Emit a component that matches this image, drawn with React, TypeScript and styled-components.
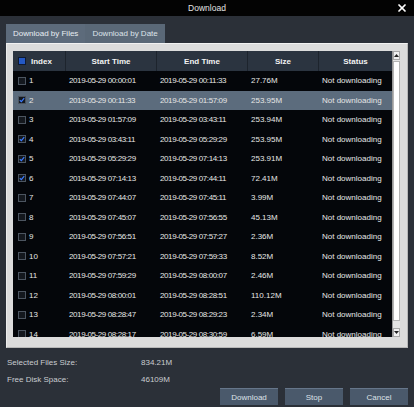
import React from "react";
import styled, { createGlobalStyle } from "styled-components";
import { X } from "lucide-react";

const rows = [
  { index: 1, start: "2019-05-29 00:00:01", end: "2019-05-29 00:11:33", size: "27.76M", checked: false },
  { index: 2, start: "2019-05-29 00:11:33", end: "2019-05-29 01:57:09", size: "253.95M", checked: true },
  { index: 3, start: "2019-05-29 01:57:09", end: "2019-05-29 03:43:11", size: "253.94M", checked: false },
  { index: 4, start: "2019-05-29 03:43:11", end: "2019-05-29 05:29:29", size: "253.95M", checked: true },
  { index: 5, start: "2019-05-29 05:29:29", end: "2019-05-29 07:14:13", size: "253.91M", checked: true },
  { index: 6, start: "2019-05-29 07:14:13", end: "2019-05-29 07:44:11", size: "72.41M", checked: true },
  { index: 7, start: "2019-05-29 07:44:07", end: "2019-05-29 07:45:11", size: "3.99M", checked: false },
  { index: 8, start: "2019-05-29 07:45:07", end: "2019-05-29 07:56:55", size: "45.13M", checked: false },
  { index: 9, start: "2019-05-29 07:56:51", end: "2019-05-29 07:57:27", size: "2.36M", checked: false },
  { index: 10, start: "2019-05-29 07:57:21", end: "2019-05-29 07:59:33", size: "8.52M", checked: false },
  { index: 11, start: "2019-05-29 07:59:29", end: "2019-05-29 08:00:07", size: "2.46M", checked: false },
  { index: 12, start: "2019-05-29 08:00:01", end: "2019-05-29 08:28:51", size: "110.12M", checked: false },
  { index: 13, start: "2019-05-29 08:28:47", end: "2019-05-29 08:29:23", size: "2.34M", checked: false },
  { index: 14, start: "2019-05-29 08:28:17", end: "2019-05-29 08:30:59", size: "6.59M", checked: false },
];

const selectedRow = 2;

const GlobalStyle = createGlobalStyle`
  html, body {
    margin: 0;
    padding: 0;
    background: #2b3038;
  }
  body {
    font-family: "Liberation Sans", Arial, sans-serif;
    font-size: 8px;
  }
`;

const Window = styled.div`
  width: 414px;
  height: 407px;
  background: #2b3038;
  display: flex;
  flex-direction: column;
  overflow: hidden;
`;

const TitleBar = styled.div`
  height: 16px;
  background: #030303;
  color: #e4e4e4;
  font-size: 8.5px;
  display: flex;
  align-items: center;
  justify-content: center;
  position: relative;
`;

const CloseBtn = styled.div`
  position: absolute;
  right: 6px;
  top: 2px;
  width: 12px;
  height: 12px;
  display: flex;
  color: #ffffff;
`;

const Content = styled.div`
  padding: 8px 6px 0 6px;
  display: flex;
  flex-direction: column;
`;

const TabBar = styled.div`
  display: flex;
  align-self: flex-start;
  height: 19px;
  background: #5a6877;
`;

const Tab = styled.div<{ $active?: boolean }>`
  padding: 0 7px;
  display: flex;
  align-items: center;
  color: ${(p) => (p.$active ? "#e8edf2" : "#dde3e9")};
  background: ${(p) => (p.$active ? "#5d6b7b" : "#5a6877")};
`;

const Panel = styled.div`
  background: #dcdcdc;
  border-top: 1px solid #f2f2f2;
  border-left: 1px solid #ececec;
  border-right: 1px solid #b8b8b8;
  border-bottom: 1px solid #b8b8b8;
  padding: 7px 7px 0 6px;
  height: 305px;
  box-sizing: border-box;
`;

const Table = styled.div`
  display: flex;
  height: 286px;
  background: #04060a;
`;

const TableMain = styled.div`
  width: 379px;
  display: flex;
  flex-direction: column;
  overflow: hidden;
`;

const Grid = styled.div`
  display: grid;
  grid-template-columns: 53px 91px 91px 71px 73px;
`;

const HeaderRow = styled(Grid)`
  height: 20px;
  background: #2b3440;
  flex-shrink: 0;
`;

const HeaderCell = styled.div<{ $left?: boolean }>`
  display: flex;
  align-items: center;
  justify-content: ${(p) => (p.$left ? "flex-start" : "center")};
  padding-left: ${(p) => (p.$left ? "5px" : "0")};
  gap: 5px;
  color: #f2f2f2;
  font-weight: bold;
  border-right: 1px solid #1d242d;
  &:last-child {
    border-right: none;
  }
`;

const Body = styled.div`
  flex: 1;
  overflow: hidden;
`;

const Row = styled(Grid)<{ $selected?: boolean }>`
  height: 19.5px;
  background: ${(p) => (p.$selected ? "#5c6c7d" : "#04060a")};
  color: #e6e6e6;
`;

const Cell = styled.div<{ $time?: boolean }>`
  display: flex;
  align-items: center;
  padding-left: 3px;
  white-space: nowrap;
  letter-spacing: ${(p) => (p.$time ? "-0.4px" : "0")};
`;

const IndexCell = styled.div`
  display: flex;
  align-items: center;
  padding-left: 5px;
  gap: 3px;
`;

const Checkbox = styled.div<{ $header?: boolean }>`
  width: 8px;
  height: 8px;
  box-sizing: border-box;
  border: 1px solid ${(p) => (p.$header ? "#0d1a33" : "#4c5560")};
  background: ${(p) => (p.$header ? "#2458c4" : "#14181e")};
  display: flex;
  align-items: center;
  justify-content: center;
`;

const Scrollbar = styled.div`
  width: 8px;
  display: flex;
  flex-direction: column;
  background: #e4e4e4;
  border-left: 1px solid #9a9a9a;
  box-sizing: border-box;
`;

const ScrollArrow = styled.div`
  height: 9px;
  background: #f0f0f0;
  border: 1px solid #a8a8a8;
  box-sizing: border-box;
  display: flex;
  align-items: center;
  justify-content: center;
`;

const ScrollThumb = styled.div`
  margin: 1px 0;
  height: 260px;
  background: #ffffff;
  border: 1px solid #b4b4b4;
  box-sizing: border-box;
`;

const ScrollTrack = styled.div`
  flex: 1;
`;

const Info = styled.div`
  padding: 6px 1px 0 1px;
  color: #c9ccd0;
`;

const InfoRow = styled.div`
  display: grid;
  grid-template-columns: 134px auto;
  height: 17px;
  align-items: center;
`;

const Buttons = styled.div`
  display: flex;
  justify-content: flex-end;
  gap: 7px;
`;

const Button = styled.button`
  width: 58px;
  height: 17px;
  padding: 0;
  border: none;
  border-top: 1px solid #66768a;
  background: #4a596b;
  color: #dde2e8;
  font-family: "Liberation Sans", Arial, sans-serif;
  font-size: 8px;
`;

function Check() {
  return (
    <svg width="6" height="6" viewBox="0 0 6 6">
      <path d="M0.8 3.2 L2.4 4.7 L5.2 1.2" fill="none" stroke="#3b7bff" strokeWidth="1.2" />
    </svg>
  );
}

function Arrow({ down }: { down?: boolean }) {
  return (
    <svg width="5" height="3" viewBox="0 0 5 3">
      <path d={down ? "M0 0 L2.5 3 L5 0 Z" : "M0 3 L2.5 0 L5 3 Z"} fill="#222" />
    </svg>
  );
}

export default function App() {
  return (
    <>
      <GlobalStyle />
      <Window>
        <TitleBar>
          Download
          <CloseBtn>
            <X size={12} strokeWidth={3.5} />
          </CloseBtn>
        </TitleBar>
        <Content>
          <TabBar>
            <Tab $active>Download by Files</Tab>
            <Tab>Download by Date</Tab>
          </TabBar>
          <Panel>
            <Table>
              <TableMain>
                <HeaderRow>
                  <HeaderCell $left>
                    <Checkbox $header />
                    Index
                  </HeaderCell>
                  <HeaderCell>Start Time</HeaderCell>
                  <HeaderCell>End Time</HeaderCell>
                  <HeaderCell>Size</HeaderCell>
                  <HeaderCell>Status</HeaderCell>
                </HeaderRow>
                <Body>
                  {rows.map((item) => (
                    <Row key={item.index} $selected={item.index === selectedRow}>
                      <IndexCell>
                        <Checkbox>{item.checked && <Check />}</Checkbox>
                        {item.index}
                      </IndexCell>
                      <Cell $time>{item.start}</Cell>
                      <Cell $time>{item.end}</Cell>
                      <Cell>{item.size}</Cell>
                      <Cell>Not downloading</Cell>
                    </Row>
                  ))}
                </Body>
              </TableMain>
              <Scrollbar>
                <ScrollArrow>
                  <Arrow />
                </ScrollArrow>
                <ScrollThumb />
                <ScrollTrack />
                <ScrollArrow>
                  <Arrow down />
                </ScrollArrow>
              </Scrollbar>
            </Table>
          </Panel>
          <Info>
            <InfoRow>
              <span>Selected Files Size:</span>
              <span>834.21M</span>
            </InfoRow>
            <InfoRow>
              <span>Free Disk Space:</span>
              <span>46109M</span>
            </InfoRow>
          </Info>
          <Buttons>
            <Button>Download</Button>
            <Button>Stop</Button>
            <Button>Cancel</Button>
          </Buttons>
        </Content>
      </Window>
    </>
  );
}
